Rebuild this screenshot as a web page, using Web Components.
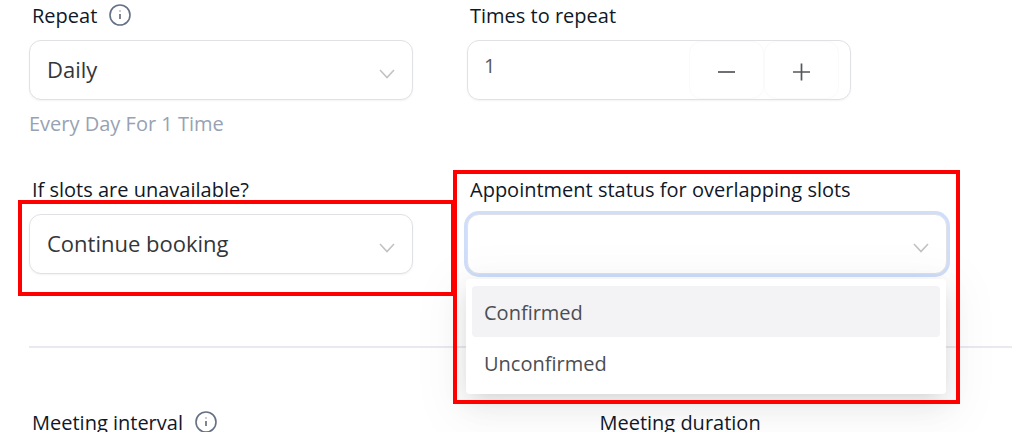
<!DOCTYPE html>
<html lang="en">
<head>
<meta charset="utf-8">
<meta name="viewport" content="width=device-width, initial-scale=1">
<title>Recurring booking settings</title>
<style>
  body { margin: 0; background: #fff; color: #101828; font: 20px/32px "Open Sans", "Noto Sans", sans-serif; }
</style>
</head>
<body>
<booking-settings></booking-settings>

<template id="info-icon">
  <style>
    :host { display: block; width: 24px; height: 24px; color: #667085; }
    svg { display: block; }
  </style>
  <svg width="24" height="24" viewBox="0 0 24 24" fill="none" stroke="currentColor" aria-hidden="true">
    <circle cx="12" cy="12" r="10" stroke-width="1.6"/>
    <path d="M12 11v5" stroke-width="1.7"/>
    <path d="M12 7.2v1.6" stroke-width="1.7" opacity=".55"/>
  </svg>
</template>

<template id="field-label">
  <style>
    :host { display: flex; align-items: center; gap: 11px; height: 32px; padding-left: 3px; white-space: nowrap; }
    info-icon { margin-bottom: 3px; }
  </style>
  <slot></slot>
</template>

<template id="select-field">
  <style>
    :host { display: flex; flex-direction: column; gap: 8px; }
    .box { position: relative; display: grid; }
    select {
      grid-area: 1 / 1; width: 100%; height: 60px; margin: 0; padding: 0 56px 2px 17px;
      appearance: none; border: 1px solid #e0e1e5; border-radius: 12px; background: #fff;
      box-shadow: 0 1px 2px rgba(16, 24, 40, .05);
      color: #333639; font: inherit; font-size: 22px; outline: none;
    }
    .chevron { grid-area: 1 / 1; place-self: center end; margin: 8px 16px 0 0; pointer-events: none; }
    :host([open]) select { box-shadow: 0 0 0 3px #d1defa; }
  </style>
  <field-label><label for="control"></label></field-label>
  <div class="box">
    <select id="control"></select>
    <svg class="chevron" width="20" height="20" viewBox="0 0 20 20" fill="none" stroke="#c2c2c2" stroke-width="1.6" aria-hidden="true"><path d="M3 6l7 7.5L17 6"/></svg>
    <slot name="overlay"></slot>
  </div>
</template>

<template id="number-field">
  <style>
    :host { display: flex; flex-direction: column; gap: 8px; }
    .box {
      display: flex; box-sizing: border-box; height: 60px; padding-right: 11px;
      border: 1px solid #e0e1e5; border-radius: 12px; box-shadow: 0 1px 2px rgba(16, 24, 40, .05);
    }
    input {
      flex: 1; min-width: 0; margin: 0; padding: 0 0 8px 16px; border: 0; outline: none;
      background: none; color: #565a60; font: inherit; appearance: textfield;
    }
    input::-webkit-inner-spin-button { appearance: none; }
    button {
      display: grid; place-items: center; width: 75px; padding: 4px 0 0; background: #fff;
      border: 1px solid #fafafa; border-radius: 12px; color: #54575b;
    }
  </style>
  <field-label><label for="control">Times to repeat</label></field-label>
  <div class="box">
    <input id="control" type="number" value="1" min="1">
    <button type="button" aria-label="Decrease"><svg width="20" height="20" fill="none" stroke="currentColor" stroke-width="1.7"><path d="M1 10h17"/></svg></button>
    <button type="button" aria-label="Increase"><svg width="20" height="20" fill="none" stroke="currentColor" stroke-width="1.7"><path d="M1 10h17M9.5 1.5v17"/></svg></button>
  </div>
</template>

<template id="option-menu">
  <style>
    :host {
      display: flex; flex-direction: column; box-sizing: border-box; padding: 7px 6px 6px; background: #fff;
      border-radius: 4px;
      box-shadow: 0 6px 16px -9px rgba(0, 0, 0, .12), 0 9px 28px rgba(0, 0, 0, .08), 0 12px 48px 16px rgba(0, 0, 0, .04);
    }
    button {
      height: 51px; padding: 3px 12px 0; border: 0; border-radius: 4px; background: none;
      color: #4b4e53; font: inherit; text-align: left;
    }
    button[aria-selected="true"] { background: #f3f3f5; }
  </style>
  <button type="button" role="option" aria-selected="true">Confirmed</button>
  <button type="button" role="option" aria-selected="false">Unconfirmed</button>
</template>

<template id="highlight-frame">
  <style>:host { display: block; box-sizing: border-box; border: 4px solid #f00; pointer-events: none; }</style>
</template>

<template id="booking-settings">
  <style>
    :host { display: block; padding-left: 29px; overflow: hidden; }
    .fields { display: grid; grid-template-columns: 4fr 5fr; column-gap: 54px; row-gap: 34px; padding-right: 65px; }
    .repeat { display: flex; flex-direction: column; gap: 8px; }
    .hint { margin: 0; color: #98a2b3; }
    number-field { width: 80%; }
    .status { position: relative; z-index: 1; }
    option-menu { position: absolute; top: 65px; left: -1px; right: 1px; }
    .around-select { position: absolute; inset: -14px -42px -22px -11px; }
    .around-status { position: absolute; inset: -4px -13px -130px -14px; }
    hr { height: 2px; margin: 72px 0 59px; border: 0; background: #e9eaef; }
    .meeting { display: grid; grid-template-columns: 5fr 4fr; column-gap: 48px; position: relative; z-index: 2; }
  </style>
  <div class="fields">
    <div class="repeat">
      <select-field label="Repeat" value="Daily" info></select-field>
      <p class="hint">Every Day For 1 Time</p>
    </div>
    <number-field></number-field>
    <select-field label="If slots are unavailable?" value="Continue booking">
      <highlight-frame slot="overlay" class="around-select"></highlight-frame>
    </select-field>
    <div class="status">
      <select-field label="Appointment status for overlapping slots" value="" open>
        <option-menu slot="overlay" role="listbox"></option-menu>
      </select-field>
      <highlight-frame class="around-status"></highlight-frame>
    </div>
  </div>
  <hr>
  <div class="meeting">
    <field-label info>Meeting interval</field-label>
    <field-label>Meeting duration</field-label>
  </div>
</template>

<script>
  class TemplateElement extends HTMLElement {
    constructor() {
      super();
      const template = document.getElementById(this.localName);
      this.attachShadow({ mode: "open" }).append(template.content.cloneNode(true));
    }
  }
  customElements.define("info-icon", class extends TemplateElement {});
  customElements.define("field-label", class extends TemplateElement {
    connectedCallback() {
      if (this.hasAttribute("info") && !this.shadowRoot.querySelector("info-icon"))
        this.shadowRoot.append(document.createElement("info-icon"));
    }
  });
  customElements.define("select-field", class extends TemplateElement {
    connectedCallback() {
      const root = this.shadowRoot;
      root.querySelector("label").textContent = this.getAttribute("label");
      const value = this.getAttribute("value");
      root.querySelector("select").replaceChildren(new Option(value, value));
      if (this.hasAttribute("info")) {
        const label = root.querySelector("field-label");
        label.setAttribute("info", "");
        label.connectedCallback?.();
      }
    }
  });
  customElements.define("number-field", class extends TemplateElement {
    connectedCallback() {
      const input = this.shadowRoot.querySelector("input");
      const [minus, plus] = this.shadowRoot.querySelectorAll("button");
      minus.onclick = () => input.stepDown();
      plus.onclick = () => input.stepUp();
    }
  });
  customElements.define("option-menu", class extends TemplateElement {});
  customElements.define("highlight-frame", class extends TemplateElement {});
  customElements.define("booking-settings", class extends TemplateElement {});
</script>
</body>
</html>
